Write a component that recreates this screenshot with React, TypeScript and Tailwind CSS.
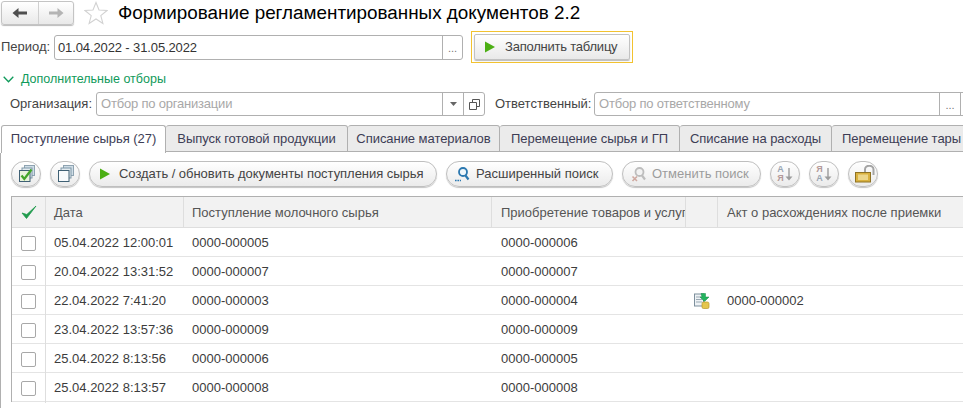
import { ReactNode } from "react";

const rows = [
  ["05.04.2022 12:00:01", "0000-000005", "0000-000006", ""],
  ["20.04.2022 13:31:52", "0000-000007", "0000-000007", ""],
  ["22.04.2022 7:41:20", "0000-000003", "0000-000004", "0000-000002"],
  ["23.04.2022 13:57:36", "0000-000009", "0000-000009", ""],
  ["25.04.2022 8:13:56", "0000-000006", "0000-000005", ""],
  ["25.04.2022 8:13:57", "0000-000008", "0000-000008", ""],
];

const tabs = [
  ["Выпуск готовой продукции", "w-[182px]"],
  ["Списание материалов", "w-[152px]"],
  ["Перемещение сырья и ГП", "w-[180px]"],
  ["Списание на расходы", "w-[152px]"],
  ["Перемещение тары", "w-[140px]"],
];

const Play = () => (
  <svg width="12" height="12" viewBox="0 0 12 12" className="shrink-0">
    <path d="M1 0.5 L11 6 L1 11.5 Z" fill="#4caf14" />
  </svg>
);

function Round({ children, className }: { children: ReactNode; className?: string }) {
  return (
    <div className={"h-[26px] shrink-0 flex items-center rounded-full border border-[#bfbfbf] bg-gradient-to-b from-white to-[#ebebeb] shadow-[0_1px_1px_#c4c4c4] " + (className ?? "justify-center w-[30px]")}>
      {children}
    </div>
  );
}

const SortIcon = ({ flip }: { flip?: boolean }) => (
  <div className="flex items-center gap-[1px]">
    <div className="flex flex-col text-[9px] leading-[9px] font-bold">
      <span className={flip ? "text-[#b49a9a]" : "text-[#9aa6b4]"}>{flip ? "Я" : "А"}</span>
      <span className={flip ? "text-[#9aa6b4]" : "text-[#b49a9a]"}>{flip ? "А" : "Я"}</span>
    </div>
    <svg width="8" height="15" viewBox="0 0 8 15">
      <path d="M4 1 V10" stroke="#9c9c9c" strokeWidth="1.4" />
      <path d="M0.5 9.5 H7.5 L4 13.5 Z" fill="#9c9c9c" />
    </svg>
  </div>
);

const StackIcon = ({ check }: { check?: boolean }) => (
  <svg width="20" height="18" viewBox="0 0 20 18">
    <rect x="8.5" y="0.5" width="10" height="10" fill="#cfdde6" stroke="#8ea3b1" />
    <rect x="6" y="3" width="10" height="10" fill="#e3ebf0" stroke="#7f97a7" />
    <rect x="3.5" y="5.5" width="10.5" height="11" fill={check ? "#e9f3dc" : "#f7fafc"} stroke="#3f6074" />
    {check && <path d="M5.5 10.5 L8.3 14 L15.5 4.5" fill="none" stroke="#43a62a" strokeWidth="2.3" />}
  </svg>
);

export default function App() {
  return (
    <div className="w-[963px] h-[408px] overflow-hidden bg-white text-[13px] text-[#444] font-['Liberation_Sans',Arial,sans-serif]">
      {/* header */}
      <div className="flex items-center h-[25px] pt-[1px] pl-[1px]">
        <div className="flex w-[73px] h-[24px] rounded-[3px] border border-[#c4c4c4] bg-gradient-to-b from-white to-[#e9e9e9] shadow-[0_1px_1px_#bbb]">
          <div className="w-[37px] flex items-center justify-center border-r border-[#d0d0d0]">
            <svg width="16" height="12" viewBox="0 0 16 12"><path d="M0.5 6 L6.5 1 V4.5 H15 V7.5 H6.5 V11 Z" fill="#4f4f4f" /></svg>
          </div>
          <div className="flex-1 flex items-center justify-center">
            <svg width="16" height="12" viewBox="0 0 16 12"><path d="M15.5 6 L9.5 1 V4.5 H1 V7.5 H9.5 V11 Z" fill="#b4b4b4" /></svg>
          </div>
        </div>
        <svg width="24" height="24" viewBox="0 0 24 24" className="ml-[10px]">
          <path d="M12 1.5 L15 9 L23 9.5 L16.8 14.6 L18.9 22.4 L12 18 L5.1 22.4 L7.2 14.6 L1 9.5 L9 9 Z" fill="#fff" stroke="#d2d2d2" strokeWidth="1.1" />
        </svg>
        <h1 className="ml-[10px] text-[18.85px] leading-[24px] text-black whitespace-nowrap">Формирование регламентированных документов 2.2</h1>
      </div>

      {/* period */}
      <div className="flex items-center h-[32px] mt-[6px] pl-[1px]">
        <span className="w-[53px] shrink-0">Период:</span>
        <div className="flex w-[409px] h-[25px] shrink-0 rounded-[3px] border border-[#b0b0b0]">
          <span className="flex-1 pl-[3px] leading-[24px] text-[#333] tracking-[-0.12px]">01.04.2022 - 31.05.2022</span>
          <span className="w-[20px] border-l border-[#b0b0b0] text-center leading-[25px] text-[#777] text-[11px]">...</span>
        </div>
        <div className="ml-[8px] p-[2px] border border-[#f2c230] shrink-0">
          <div className="flex items-center w-[156px] h-[26px] pl-[9px] gap-[9px] rounded-[2px] border border-[#c2c2c2] bg-gradient-to-b from-white to-[#e9e9e9] shadow-[0_1px_1px_#bbb] tracking-[-0.22px]">
            <Play />
            <span>Заполнить таблицу</span>
          </div>
        </div>
      </div>

      {/* extra filters */}
      <div className="flex items-center h-[16px] mt-[8px] pl-[3px] gap-[7px] text-[12.5px] text-[#0f9a5a]">
        <svg width="11" height="7" viewBox="0 0 11 7"><path d="M0.7 0.7 L5.5 5.7 L10.3 0.7" fill="none" stroke="#0f9a5a" strokeWidth="1.3" /></svg>
        <span>Дополнительные отборы</span>
      </div>

      <div className="flex items-center h-[24px] mt-[5px] pl-[10px] whitespace-nowrap">
        <span className="w-[86px] shrink-0">Организация:</span>
        <div className="flex w-[389px] h-[24px] shrink-0 rounded-[3px] border border-[#b0b0b0]">
          <span className="flex-1 pl-[4px] leading-[22px] text-[#a8a8a8] tracking-[-0.2px]">Отбор по организации</span>
          <span className="w-[21px] flex items-center justify-center border-l border-[#b0b0b0]">
            <svg width="7" height="4" viewBox="0 0 7 4"><path d="M0 0 H7 L3.5 4 Z" fill="#666" /></svg>
          </span>
          <span className="w-[21px] flex items-center justify-center border-l border-[#b0b0b0]">
            <svg width="11" height="11" viewBox="0 0 11 11"><path d="M3.5 3 V0.5 H10.5 V7.5 H7.5 M0.5 3.5 H7.5 V10.5 H0.5 Z" fill="none" stroke="#555" /></svg>
          </span>
        </div>
        <span className="ml-[10px] w-[99px] shrink-0">Ответственный:</span>
        <div className="flex w-[420px] shrink-0 h-[24px] rounded-l-[3px] border border-[#b0b0b0]">
          <span className="w-[344px] shrink-0 pl-[4px] leading-[22px] text-[#a8a8a8] tracking-[-0.2px]">Отбор по ответственному</span>
          <span className="w-[21px] shrink-0 border-l border-[#b0b0b0] text-center leading-[24px] text-[#777] text-[11px]">...</span>
          <span className="border-l border-[#b0b0b0]" />
        </div>
      </div>

      {/* tabs */}
      <div className="flex h-[28px] mt-[9px] pl-[1px] whitespace-nowrap tracking-[-0.05px]">
        <div className="w-[165px] h-[28px] shrink-0 border border-b-0 border-[#b0b0b0] rounded-t-[3px] bg-white text-center leading-[26px] text-[#3d3d55]">Поступление сырья (27)</div>
        {tabs.map(([label, w]) => (
          <div key={label} className={w + " h-[27px] shrink-0 border border-l-0 border-[#b0b0b0] rounded-t-[3px] bg-[#ebebeb] text-center leading-[25px] text-[#3d3d55]"}>{label}</div>
        ))}
      </div>

      <div className="border-l border-[#b0b0b0] pl-[10px] h-[255px]">
        {/* toolbar */}
        <div className="flex gap-[9px] pt-[8px] whitespace-nowrap">
          <Round><StackIcon check /></Round>
          <Round><StackIcon /></Round>
          <Round className="w-[348px] pl-[9px] gap-[8px] tracking-[-0.04px]"><Play /><span>Создать / обновить документы поступления сырья</span></Round>
          <Round className="w-[167px] pl-[7px] gap-[6px]">
            <svg width="16" height="16" viewBox="0 0 16 16"><circle cx="9" cy="6" r="4" fill="#eef6fb" stroke="#2b78b0" strokeWidth="1.8" /><path d="M11.5 9.5 L14.5 13.5" stroke="#2b78b0" strokeWidth="2.2" /><path d="M1 14.5 H7" stroke="#2b78b0" strokeWidth="1.6" strokeDasharray="1.6 0.8" /></svg>
            <span>Расширенный поиск</span>
          </Round>
          <Round className="w-[139px] pl-[8px] gap-[5px] text-[#9c9c9c]">
            <svg width="16" height="16" viewBox="0 0 16 16"><circle cx="8.5" cy="6" r="4" fill="#f2f2f2" stroke="#bdbdbd" strokeWidth="1.8" /><path d="M11 9.5 L14 13.5" stroke="#bdbdbd" strokeWidth="2.2" /><path d="M1.5 10.5 L6 15 M6 10.5 L1.5 15" stroke="#cfa9a0" strokeWidth="1.6" /></svg>
            <span>Отменить поиск</span>
          </Round>
          <Round><SortIcon /></Round>
          <Round><SortIcon flip /></Round>
          <Round>
            <svg width="24" height="18" viewBox="0 0 24 18">
              <path d="M14 7 V4.5 A4 3.6 0 0 1 22.5 4.5 V10" fill="none" stroke="#a4a4a4" strokeWidth="2" />
              <rect x="4.5" y="7.5" width="15" height="9.5" fill="#d9b13f" stroke="#8f7223" />
              <rect x="7" y="9.5" width="10" height="5.5" fill="#ecd68a" />
            </svg>
          </Round>
        </div>

        {/* table */}
        <div className="mt-[9px] border-t border-l border-[#b0b0b0]">
          <div className="grid grid-cols-[34px_138px_308px_194px_32px_1fr] h-[31px] bg-[#f2f2f2] border-b border-[#dedede] text-[#555]">
            <div className="flex items-center justify-center border-r border-[#dedede]">
              <svg width="16" height="15" viewBox="0 0 16 15"><path d="M1 8 L5.5 13.5 L15 1 L5.8 9.5 Z" fill="#1f9a4c" stroke="#1f9a4c" strokeWidth="0.8" /></svg>
            </div>
            <div className="pl-[8px] leading-[31px] border-r border-[#dedede]">Дата</div>
            <div className="pl-[8px] leading-[31px] border-r border-[#dedede]">Поступление молочного сырья</div>
            <div className="pl-[9px] leading-[31px] border-r border-[#dedede] overflow-hidden whitespace-nowrap">Приобретение товаров и услуг</div>
            <div className="border-r border-[#dedede]" />
            <div className="pl-[9px] leading-[31px] whitespace-nowrap">Акт о расхождениях после приемки</div>
          </div>
          {rows.map((r) => (
            <div key={r[0]} className="grid grid-cols-[34px_138px_308px_194px_32px_1fr] h-[29px] border-b border-[#e4e4e4] text-[#3c3c3c]">
              <div className="flex items-center justify-center border-r border-[#dedede]">
                <div className="w-[15px] h-[15px] rounded-[2px] border border-[#a8a8a8] bg-white" />
              </div>
              <div className="pl-[8px] leading-[30px]">{r[0]}</div>
              <div className="pl-[8px] leading-[30px]">{r[1]}</div>
              <div className="pl-[9px] leading-[30px]">{r[2]}</div>
              <div className="flex items-center justify-center">
                {r[3] && (
                  <svg width="16" height="16" viewBox="0 0 16 16">
                    <rect x="0.5" y="1" width="9" height="12" fill="#eef2f5" stroke="#7d8f9c" />
                    <path d="M2 4 H8 M2 6.5 H8 M2 9 H8" stroke="#9aa9b3" />
                    <path d="M7 0.5 H11.5 V4 H15 L10.5 8.5 L6 4 H8 Z" fill="#22b35e" stroke="#168a45" strokeWidth="0.5" />
                    <rect x="8" y="9" width="7" height="6.5" rx="1.5" fill="#e5c64d" stroke="#b8962a" strokeWidth="0.7" />
                  </svg>
                )}
              </div>
              <div className="pl-[9px] leading-[30px]">{r[3]}</div>
            </div>
          ))}
        </div>
      </div>
    </div>
  );
}
